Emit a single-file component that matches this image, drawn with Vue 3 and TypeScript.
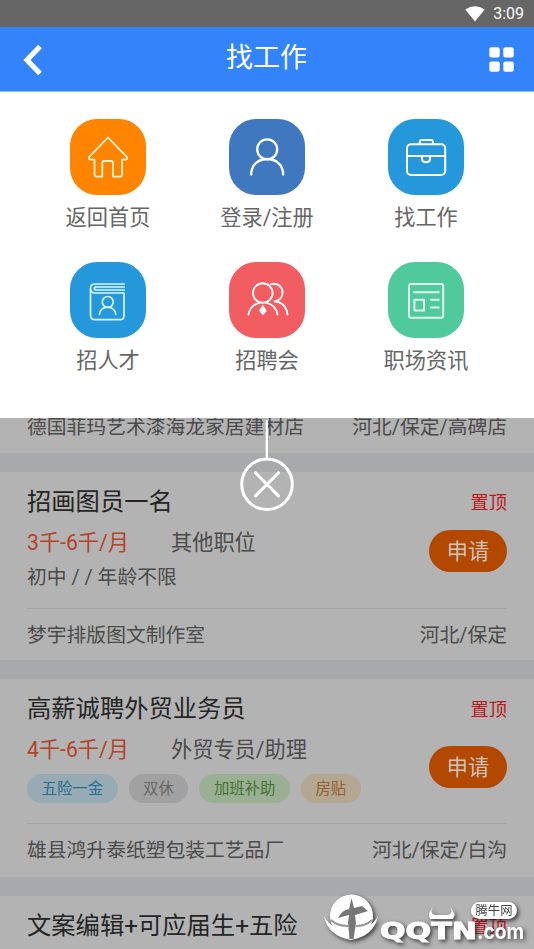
<script setup lang="ts">
interface Tag {
  text: string
  tone: string
}
interface Job {
  title: string
  salary: string
  role: string
  info?: string
  tags?: Tag[]
  company: string
  area: string
}

const menu = [
  { name: 'home', label: '返回首页' },
  { name: 'user', label: '登录/注册' },
  { name: 'work', label: '找工作' },
  { name: 'talent', label: '招人才' },
  { name: 'fair', label: '招聘会' },
  { name: 'news', label: '职场资讯' },
]

const jobs: Job[] = [
  {
    title: '招画图员一名',
    salary: '3千-6千/月',
    role: '其他职位',
    info: '初中 / / 年龄不限',
    company: '梦宇排版图文制作室',
    area: '河北/保定',
  },
  {
    title: '高薪诚聘外贸业务员',
    salary: '4千-6千/月',
    role: '外贸专员/助理',
    tags: [
      { text: '五险一金', tone: 'blue' },
      { text: '双休', tone: 'gray' },
      { text: '加班补助', tone: 'green' },
      { text: '房贴', tone: 'sand' },
    ],
    company: '雄县鸿升泰纸塑包装工艺品厂',
    area: '河北/保定/白沟',
  },
]
</script>

<template>
  <div class="screen">
    <div class="status">
      <svg class="wifi" viewBox="0 0 20 16"><path d="M0.3 3.6Q10-3.2 19.7 3.6L10 15.6Z" fill="#fff" /></svg>
      <span>3:09</span>
    </div>
    <header class="header">
      <svg class="back" viewBox="0 0 20 32"><path d="M17 2.5L4 16L17 29.5" fill="none" stroke="#fff" stroke-width="5.2" /></svg>
      <h1>找工作</h1>
      <svg class="grid-icon" viewBox="0 0 25 25" fill="#fff">
        <rect x="0.3" y="0.2" width="10.4" height="10.2" rx="2" />
        <rect x="14.3" y="0.2" width="10.4" height="10.2" rx="2" />
        <rect x="0.3" y="14.6" width="10.4" height="10.2" rx="2" />
        <rect x="14.3" y="14.6" width="10.4" height="10.2" rx="2" />
      </svg>
    </header>

    <nav class="menu">
      <a v-for="m in menu" :key="m.name" class="item">
        <span class="tile" :class="m.name">
          <svg viewBox="0 0 76 76" fill="none" stroke="#fff" stroke-width="2" stroke-linecap="round" stroke-linejoin="round">
            <path v-if="m.name === 'home'" stroke="#fff3d6" stroke-width="1.8" d="M38 18.5L19 38.2Q18.5 40.7 21 40.7H24.5V55.5Q24.5 57.6 26.6 57.6H32.3V44Q32.3 42 34.3 42H41Q43 42 43 44V57.6H50Q52 57.6 52 55.5V40.7H55.5Q58 40.7 57 38.2Z" />
            <g v-else-if="m.name === 'user'" stroke-width="2.3">
              <circle cx="38.2" cy="30.3" r="10" />
              <path d="M22.2 55.5C22.2 34.8 54.2 34.8 54.2 55.5" />
            </g>
            <g v-else-if="m.name === 'work'">
              <rect x="19" y="25.3" width="38.2" height="30.6" rx="4" />
              <path d="M19 37H57.2M31.8 25V23Q31.8 21 33.8 21H43Q45 21 45 23V25M34 37.5V39.5Q34 43.3 38 43.3Q42 43.3 42 39.5V37.5" />
            </g>
            <g v-else-if="m.name === 'talent'" stroke="#d9f6ff" stroke-width="1.7">
              <path d="M54.3 22H25Q20.5 22 20.5 26.5V53Q20.5 57.7 25 57.7H50Q54 57.7 54 53.5V31H25Q20.5 31 20.5 26.5M54.3 25H25.5Q23 26.5 25.5 28H54.3" />
              <circle cx="37.8" cy="40" r="5.5" />
              <path d="M29.5 52.3C30 42.8 45 42.8 45.7 52.3" />
            </g>
            <g v-else-if="m.name === 'fair'" stroke-width="1.9">
              <circle cx="33.8" cy="31" r="9.8" />
              <path d="M19.5 52.6C20.5 46 25 42 31 40.6M37 40.6C43 42 47.5 46 48.5 52.6M42 22.1C49 20.6 53.6 25 53.6 30.4C53.6 36 49.5 39.2 45.5 39.5C52.3 39.5 57.6 44.5 58.5 52.6" />
              <path d="M34 43.5L37.4 49L34 52.8L30.6 49Z" fill="#fff" stroke-width="0.8" />
            </g>
            <g v-else stroke="#defbee" stroke-width="2">
              <rect x="21" y="22" width="34.2" height="33.8" rx="2" />
              <path d="M25.8 30.3H50.8M43 37.7H50.8M43 45.4H50.8" />
              <rect x="26.4" y="37.8" width="9.6" height="10.6" />
            </g>
          </svg>
        </span>
        <span class="label">{{ m.label }}</span>
      </a>
    </nav>

    <main class="list">
      <svg class="close" viewBox="0 0 56 94" fill="none" stroke="#fff">
        <path d="M27.8 2V40.5" stroke-width="2.3" />
        <circle cx="28" cy="66.3" r="25.3" stroke-width="3" />
        <path d="M16.5 54.7L39.5 77.9M39.5 54.7L16.5 77.9" stroke-width="3" stroke-linecap="round" />
      </svg>
      <div class="foot clipped"><span>德国菲玛艺术漆海龙家居建材店</span><span>河北/保定/高碑店</span></div>
      <section v-for="job in jobs" :key="job.title" class="card">
        <div class="top"><h2>{{ job.title }}</h2><span class="pin">置顶</span></div>
        <div class="body" :class="{ tagged: job.tags }">
          <div>
            <div class="pay"><span class="salary">{{ job.salary }}</span><span>{{ job.role }}</span></div>
            <div v-if="job.info" class="info">{{ job.info }}</div>
            <div v-else class="tags"><span v-for="t in job.tags" :key="t.text" class="tag" :class="t.tone">{{ t.text }}</span></div>
          </div>
          <button class="apply">申请</button>
        </div>
        <div class="foot"><span>{{ job.company }}</span><span>{{ job.area }}</span></div>
      </section>
      <section class="card">
        <div class="top"><h2>文案编辑+可应届生+五险</h2><span class="pin">置顶</span></div>
      </section>
    </main>

    <svg class="brand" viewBox="0 0 214 60">
      <g fill="#fff">
        <circle cx="31.5" cy="27" r="21.5" />
        <path d="M4 27Q8 47 31 51Q54 47 58 27Q51 41 31 42Q11 41 4 27Z" />
        <path d="M113 18Q107 25 110 30H133Q137 25 130 18Q134 24 128 26H115Q109 24 113 18Z" />
        <text class="qq" x="60" y="50" textLength="97" lengthAdjust="spacingAndGlyphs">QQTN</text>
        <text class="com" x="157" y="50" textLength="47" lengthAdjust="spacingAndGlyphs">.com</text>
        <rect x="151" y="13" width="46" height="17" rx="8.5" />
      </g>
      <path d="M31.5 9L34 19L42 17L48 22L35 26L36 34L33.5 50H29.5L28 34L29 26L18 29Q22 21 29 20Z" fill="#777" />
      <path d="M11 31Q17 37 28 37M36 37Q46 37 52 31" fill="none" stroke="#999" stroke-width="2" />
      <text class="cn" x="155.5" y="26" textLength="37" lengthAdjust="spacingAndGlyphs">腾牛网</text>
    </svg>
  </div>
</template>

<style>
body {
  margin: 0;
  overflow: hidden;
}
</style>

<style scoped>
.screen {
  position: relative;
  display: flex;
  flex-direction: column;
  width: 534px;
  height: 949px;
  overflow: hidden;
  background: #b3b3b3;
  font-family: Roboto, "Noto Sans CJK SC", sans-serif;
  font-weight: 400;
}
.status {
  display: flex;
  flex: none;
  align-items: center;
  justify-content: flex-end;
  gap: 8px;
  height: 27px;
  padding: 0 10px 0 0;
  box-sizing: border-box;
  background: #666;
  color: #fff;
  font-size: 16px;
  line-height: 29px;
}
.wifi {
  width: 20px;
  height: 16px;
}
.header {
  display: flex;
  flex: none;
  align-items: center;
  justify-content: space-between;
  height: 65px;
  padding: 0 20px 0 23px;
  box-sizing: border-box;
  background: #3384fb;
  border-bottom: 1px solid #8ab8fc;
  color: #fff;
}
.back {
  width: 20px;
  height: 32px;
  margin-top: 2px;
}
.header h1 {
  margin: 0 0 2px 1px;
  font-size: 27px;
  font-weight: inherit;
  line-height: 40px;
}
.grid-icon {
  width: 25px;
  height: 25px;
  margin-top: 1px;
}
.menu {
  display: grid;
  flex: none;
  grid-template-columns: repeat(3, 159px);
  grid-auto-rows: 142.5px;
  justify-content: center;
  height: 326px;
  padding-top: 27px;
  box-sizing: border-box;
  background: #fff;
}
.item {
  display: flex;
  flex-direction: column;
  align-items: center;
}
.tile {
  width: 76px;
  height: 76px;
  border-radius: 27px;
}
.tile svg {
  display: block;
  width: 76px;
  height: 76px;
}
.home { background: #ff8400; }
.user { background: #4078c0; }
.work, .talent { background: #2598dc; }
.fair { background: #f15d60; }
.news { background: #50c99c; }
.label {
  margin-top: 8px;
  color: #666;
  font-size: 21.2px;
  line-height: 30px;
}
.list {
  position: relative;
  flex: 1;
  min-height: 0;
  overflow: hidden;
  color: #4b4b4b;
}
.close {
  position: absolute;
  z-index: 2;
  top: 0;
  left: 239px;
  width: 56px;
  height: 94px;
}
.card {
  padding-top: 12px;
  border-top: 19px solid #a7a9ac;
}
.top {
  display: flex;
  align-items: center;
  justify-content: space-between;
  height: 36px;
  padding: 0 27px;
}
.top h2 {
  margin: 0;
  color: #252525;
  font-size: 24.3px;
  font-weight: inherit;
  line-height: 38px;
}
.pin {
  color: #bd1719;
  font-size: 18.2px;
  line-height: 35px;
}
.body {
  display: flex;
  justify-content: space-between;
  height: 88px;
  margin: 0 27px;
  border-bottom: 1px solid #a5a5a5;
}
.body.tagged {
  height: 96px;
}
.pay {
  display: flex;
  height: 42px;
  font-size: 21.2px;
  line-height: 45px;
}
.salary {
  width: 144px;
  color: #b34329;
}
.info {
  font-size: 19.8px;
  line-height: 32px;
}
.apply {
  width: 78px;
  height: 42px;
  margin-top: 10px;
  padding: 0;
  border: 0;
  border-radius: 21px;
  background: #b34800;
  color: #cfc4bd;
  font: inherit;
  font-size: 21.2px;
  line-height: 43px;
}
.tagged .apply {
  margin-top: 19px;
}
.tags {
  display: flex;
  gap: 11px;
  margin-top: 5px;
}
.tag {
  height: 29px;
  padding: 0 14.5px;
  border-radius: 15px;
  font-size: 15.4px;
  line-height: 30px;
}
.blue { background: #98aab3; color: #246f8b; }
.gray { background: #a1a1a1; color: #686868; }
.green { background: #9baf94; color: #467332; }
.sand { background: #b3a792; color: #94602d; }
.foot {
  display: flex;
  justify-content: space-between;
  height: 51px;
  padding: 0 27px;
  font-size: 19.8px;
  line-height: 53px;
}
.tagged + .foot {
  height: 53px;
  line-height: 54px;
}
.clipped {
  height: 35px;
  line-height: 19px;
}
.brand {
  position: absolute;
  z-index: 3;
  right: 0;
  bottom: 0;
  width: 214px;
  height: 60px;
  filter: drop-shadow(2px 2px 2px rgba(0, 0, 0, 0.65));
}
.qq {
  stroke: #fff;
  stroke-width: 1px;
  font: bold 23px "DejaVu Sans", sans-serif;
}
.com {
  font: bold 21px Inter, sans-serif;
}
.cn {
  fill: #444;
  font: 12.5px "Noto Sans CJK SC", sans-serif;
}
</style>
